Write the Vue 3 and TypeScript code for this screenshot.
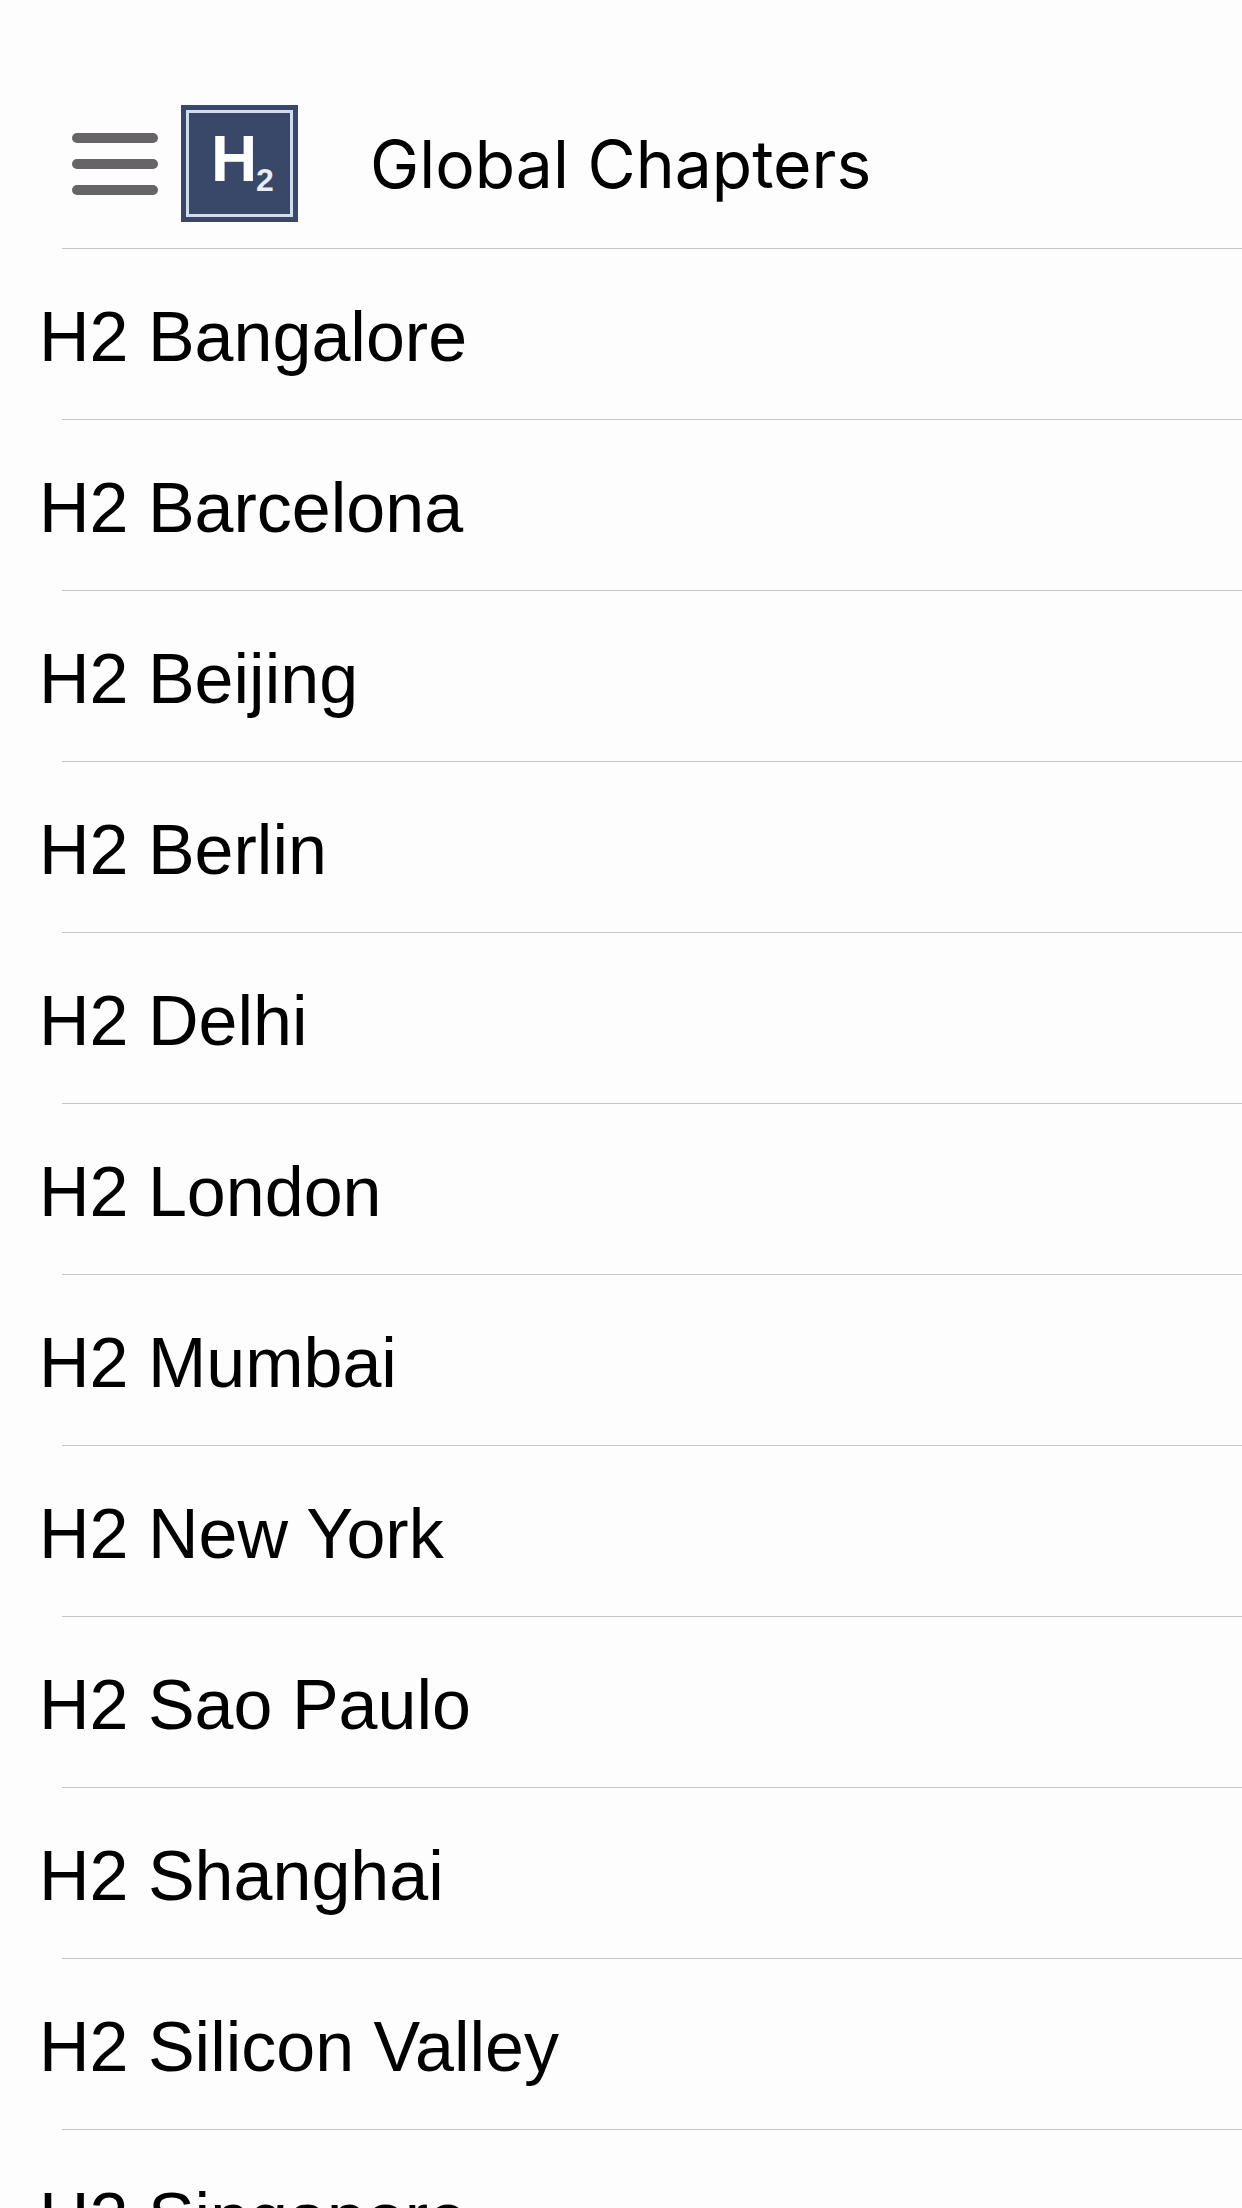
<script setup lang="ts">
interface Chapter {
  slug: string
  name: string
}

const chapters: Chapter[] = [
  'Bangalore',
  'Barcelona',
  'Beijing',
  'Berlin',
  'Delhi',
  'London',
  'Mumbai',
  'New York',
  'Sao Paulo',
  'Shanghai',
  'Silicon Valley',
  'Singapore',
].map((city) => ({
  slug: city.toLowerCase().replace(/ /g, '-'),
  name: `H2 ${city}`,
}))
</script>

<template>
  <div class="screen">
    <header class="top-bar">
      <button class="menu" type="button" aria-label="Menu">
        <span class="menu-line"></span>
        <span class="menu-line"></span>
        <span class="menu-line"></span>
      </button>
      <svg class="logo" viewBox="0 0 117 117" role="img" aria-label="H2">
        <rect width="117" height="117" fill="#394768" />
        <rect x="6.5" y="6.5" width="104" height="104" fill="none" stroke="#d3dbef" stroke-width="3" />
        <text class="logo-letter" x="30" y="76">H</text>
        <text class="logo-sub" x="75" y="86">2</text>
      </svg>
      <h1 class="title">Global Chapters</h1>
    </header>
    <main class="content">
      <ul class="chapters">
        <li v-for="chapter in chapters" :key="chapter.slug" class="row">
          <a class="link" :href="`#${chapter.slug}`">{{ chapter.name }}</a>
        </li>
      </ul>
    </main>
  </div>
</template>

<style>
body {
  margin: 0;
  background: #fdfdfd;
}
</style>

<style scoped>
.screen {
  display: flex;
  flex-direction: column;
  height: 100vh;
  overflow: hidden;
  background: #fdfdfd;
  color: #000;
  font-family: 'Liberation Sans', Arial, sans-serif;
}

.top-bar {
  flex: none;
  display: flex;
  align-items: center;
  padding: 105px 0 26px 72px;
}

.menu {
  display: flex;
  flex-direction: column;
  gap: 16px;
  width: 86px;
  padding: 0;
  border: 0;
  background: none;
}

.menu-line {
  height: 10px;
  border-radius: 5px;
  background: #666467;
}

.logo {
  flex: none;
  width: 117px;
  height: 117px;
  margin-left: 23px;
}

.logo-letter {
  fill: #fff;
  font-size: 64px;
  font-weight: 700;
}

.logo-sub {
  fill: #e6ecf8;
  font-size: 32px;
  font-weight: 700;
}

.title {
  margin: 0 0 0 72px;
  font-family: Inter, sans-serif;
  font-size: 66px;
  font-weight: 400;
  line-height: 84px;
  white-space: nowrap;
}

.content {
  flex: 1;
  min-height: 0;
  overflow-y: auto;
  scrollbar-width: none;
}

.chapters {
  margin: 0;
  padding: 0;
  list-style: none;
}

.chapters::before,
.row::after {
  content: '';
  display: block;
  height: 1px;
  margin-left: 62px;
  background: #c5c4c8;
}

.link {
  display: block;
  padding: 6px 39px 0;
  color: inherit;
  font-size: 70px;
  line-height: 164px;
  text-decoration: none;
}
</style>
